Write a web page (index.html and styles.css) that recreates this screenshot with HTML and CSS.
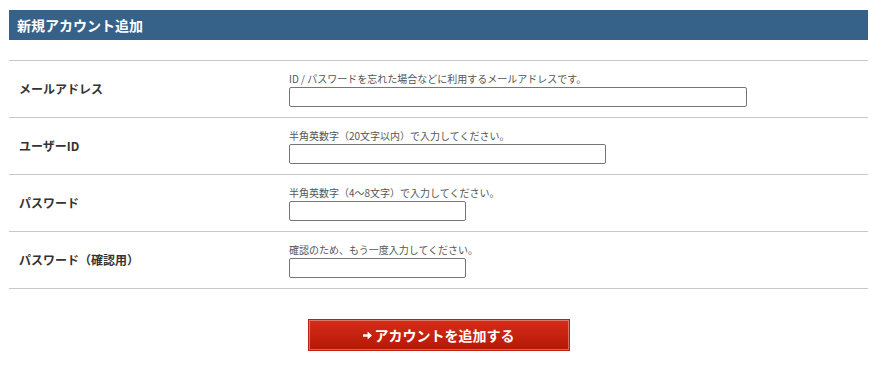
FILE: index.html
```html
<!DOCTYPE html>
<html lang="ja">
<head>
	<meta charset="UTF-8">
	<title>新規アカウント追加</title>
	<link rel="stylesheet" href="styles.css">
</head>
<body>

	<div id="container">
		<h2 class="title">新規アカウント追加</h2>

		<div class="form">
			<div class="row">
				<div class="label">メールアドレス</div>
				<div class="field">
					<p class="note">ID / パスワードを忘れた場合などに利用するメールアドレスです。</p>
					<input type="text" class="input w-long">
				</div>
			</div>
			<div class="row">
				<div class="label">ユーザーID</div>
				<div class="field">
					<p class="note">半角英数字（20文字以内）で入力してください。</p>
					<input type="text" class="input w-mid">
				</div>
			</div>
			<div class="row">
				<div class="label">パスワード</div>
				<div class="field">
					<p class="note">半角英数字（4～8文字）で入力してください。</p>
					<input type="password" class="input w-short">
				</div>
			</div>
			<div class="row">
				<div class="label">パスワード（確認用）</div>
				<div class="field">
					<p class="note">確認のため、もう一度入力してください。</p>
					<input type="password" class="input w-short">
				</div>
			</div>
		</div>

		<div class="submit">
			<button class="btn">
				<svg class="arrow" width="9" height="9" viewBox="0 0 9 9"><path d="M0 3.3h4.6V0.6L9 4.5 4.6 8.4V5.7H0z" fill="#fff"/></svg>
				アカウントを追加する
			</button>
		</div>
	</div>

</body>
</html>
```

FILE: styles.css
```css
*{
	box-sizing: border-box;
}
body{
	margin: 0;
	font-family: "Noto Sans CJK JP", "Noto Sans", sans-serif;
	color: #333;
	background-color: #fff;
}
#container{
	width: 859px;
	margin: 10px 0 0 9px;
}
.title{
	margin: 0;
	height: 30px;
	line-height: 30px;
	padding-left: 8px;
	background-color: #366189;
	color: #fff;
	font-size: 14px;
	font-weight: bold;
}
.form{
	margin-top: 20px;
	border-top: 1px solid #c8c8c8;
}
.row{
	display: flex;
	height: 57px;
	border-bottom: 1px solid #c8c8c8;
}
.label{
	width: 280px;
	padding-left: 10px;
	padding-bottom: 1px;
	display: flex;
	align-items: center;
	font-size: 12px;
	font-weight: bold;
	color: #333;
}
.field{
	padding-top: 11px;
}
.note{
	margin: 0 0 2px;
	font-size: 10px;
	line-height: 13px;
	color: #555;
}
.input{
	display: block;
	height: 20px;
	border: 1px solid #767676;
	border-radius: 2px;
	padding: 0 3px;
	outline: none;
}
.w-long{
	width: 458px;
}
.w-mid{
	width: 317px;
}
.w-short{
	width: 177px;
}
.submit{
	display: flex;
	justify-content: center;
	margin-top: 30px;
}
.btn{
	width: 262px;
	height: 32px;
	border: 1px solid #b8200f;
	box-shadow: inset 0 0 0 1px rgba(255,255,255,0.35);
	background: linear-gradient(#d52d19, #b51806);
	color: #fff;
	font-family: inherit;
	font-size: 14px;
	font-weight: bold;
	display: flex;
	align-items: center;
	justify-content: center;
	gap: 3px;
	cursor: pointer;
	padding: 0;
}
.arrow{
	display: block;
	margin-top: 1px;
}
```
